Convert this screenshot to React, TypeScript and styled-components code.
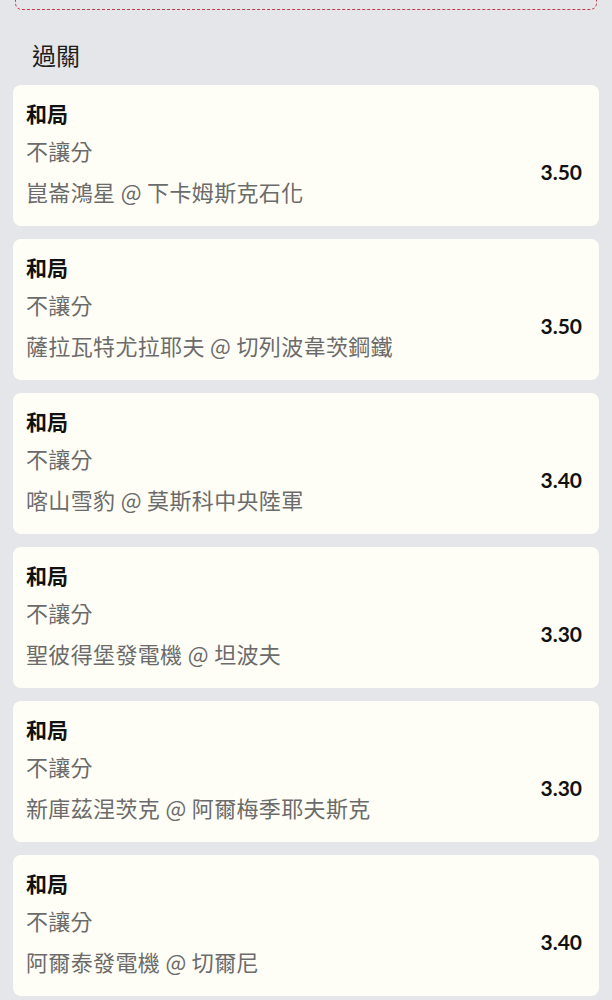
import React from "react";
import styled, { createGlobalStyle } from "styled-components";

const GlobalStyle = createGlobalStyle`
    body {
        margin: 0;
        background: #e5e6e9;
        font-family: "Noto Sans CJK TC", "Noto Sans", sans-serif;
    }
`;

type Bet = {
    pick: string;
    market: string;
    match: string;
    odds: string;
};

const bets: Bet[] = [
    { pick: "和局", market: "不讓分", match: "崑崙鴻星 @ 下卡姆斯克石化", odds: "3.50" },
    { pick: "和局", market: "不讓分", match: "薩拉瓦特尤拉耶夫 @ 切列波韋茨鋼鐵", odds: "3.50" },
    { pick: "和局", market: "不讓分", match: "喀山雪豹 @ 莫斯科中央陸軍", odds: "3.40" },
    { pick: "和局", market: "不讓分", match: "聖彼得堡發電機 @ 坦波夫", odds: "3.30" },
    { pick: "和局", market: "不讓分", match: "新庫茲涅茨克 @ 阿爾梅季耶夫斯克", odds: "3.30" },
    { pick: "和局", market: "不讓分", match: "阿爾泰發電機 @ 切爾尼", odds: "3.40" },
];

export default function App() {
    return (
        <>
            <GlobalStyle />
            <SPage>
                <SDropZone />
                <SHeading>過關</SHeading>
                <SList>
                    {bets.map((bet, i) => (
                        <SCard key={i}>
                            <div className="info">
                                <div className="pick">{bet.pick}</div>
                                <div className="market">{bet.market}</div>
                                <div className="match">{bet.match}</div>
                            </div>
                            <div className="odds">{bet.odds}</div>
                        </SCard>
                    ))}
                </SList>
            </SPage>
        </>
    );
}

const SPage = styled.div`
    padding: 0 13px 13px;
    overflow: hidden;
`;

const SDropZone = styled.div`
    height: 60px;
    margin: -50px 2px 0;
    border: 1.5px dashed #c23a48;
    border-radius: 7px;
    box-sizing: border-box;
`;

const SHeading = styled.h2`
    margin: 28px 0 13px 19px;
    font-size: 24px;
    line-height: 34px;
    font-weight: 400;
    color: #1e1e1e;
`;

const SList = styled.div`
    display: flex;
    flex-direction: column;
    gap: 13px;
`;

const SCard = styled.div`
    display: flex;
    align-items: center;
    justify-content: space-between;
    background: #fffef6;
    border-radius: 8px;
    padding: 14px 17px 20px 13px;

    .info {
        display: flex;
        flex-direction: column;
    }
    .pick {
        font-size: 21px;
        line-height: 28px;
        font-weight: 700;
        color: #111;
    }
    .market {
        margin-top: 8px;
        font-size: 22px;
        line-height: 30px;
        letter-spacing: 0.3px;
        color: #6b6b6b;
    }
    .match {
        margin-top: 11px;
        font-size: 22px;
        line-height: 30px;
        letter-spacing: 0.35px;
        color: #6b6b6b;
    }
    .odds {
        font-family: Lato, "Noto Sans", sans-serif;
        font-weight: 700;
        font-size: 21px;
        color: #111;
        margin-top: 38px;
    }
`;
